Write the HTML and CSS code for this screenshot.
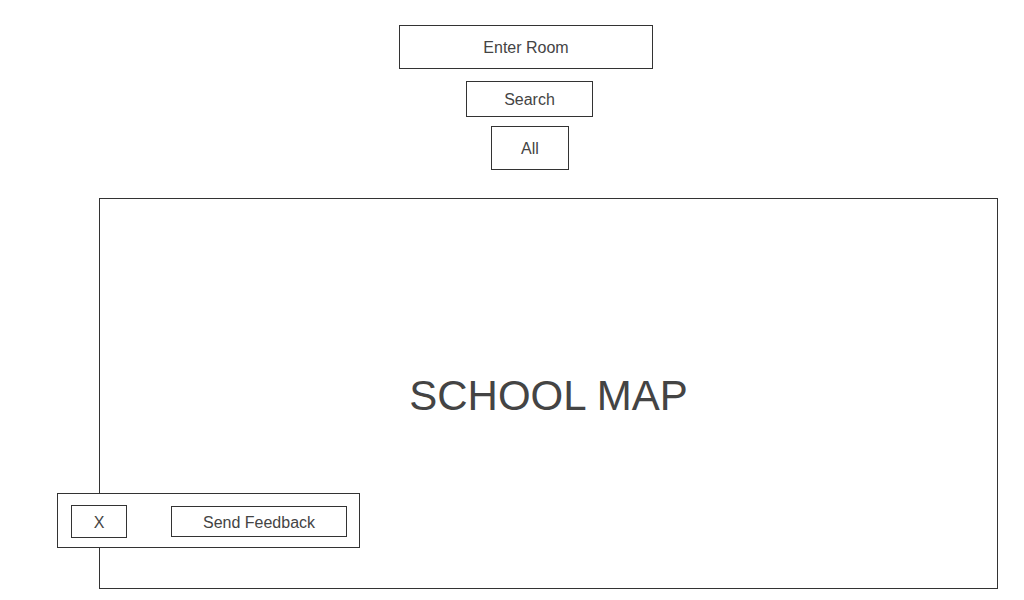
FILE: index.html
```html
<!DOCTYPE html>
<html>
<head>
<meta charset="utf-8">
<link rel="stylesheet" href="styles.css">
</head>
<body>
<div class="page">
  <div class="box room">Enter Room</div>
  <div class="box search">Search</div>
  <div class="box all">All</div>
  <div class="box map">SCHOOL MAP</div>
  <div class="box feedback">
    <div class="box close">X</div>
    <div class="box send">Send Feedback</div>
  </div>
</div>
</body>
</html>
```
FILE: styles.css
```css
html, body {
  margin: 0;
  padding: 0;
  background: #ffffff;
}
body {
  font-family: "Liberation Sans", Arial, sans-serif;
  color: #444444;
  font-size: 16px;
}
.page {
  position: relative;
  width: 1024px;
  height: 600px;
  display: flex;
  flex-direction: column;
  align-items: flex-start;
}
.box {
  box-sizing: border-box;
  border: 1px solid #333333;
  display: flex;
  align-items: center;
  justify-content: center;
  background: #ffffff;
  padding-top: 2px;
}
.room {
  margin: 25px 0 0 399px;
  width: 254px;
  height: 44px;
}
.search {
  margin: 12px 0 0 466px;
  width: 127px;
  height: 36px;
}
.all {
  margin: 9px 0 0 491px;
  width: 78px;
  height: 44px;
}
.map {
  margin: 28px 0 0 99px;
  width: 899px;
  height: 391px;
  font-size: 42px;
  padding-top: 4px;
}
.feedback {
  position: absolute;
  left: 57px;
  top: 493px;
  width: 303px;
  height: 55px;
  justify-content: flex-start;
  align-items: flex-start;
  padding: 11px 0 0 13px;
}
.close {
  width: 56px;
  height: 33px;
}
.send {
  margin: 1px 0 0 44px;
  width: 176px;
  height: 31px;
}
```
